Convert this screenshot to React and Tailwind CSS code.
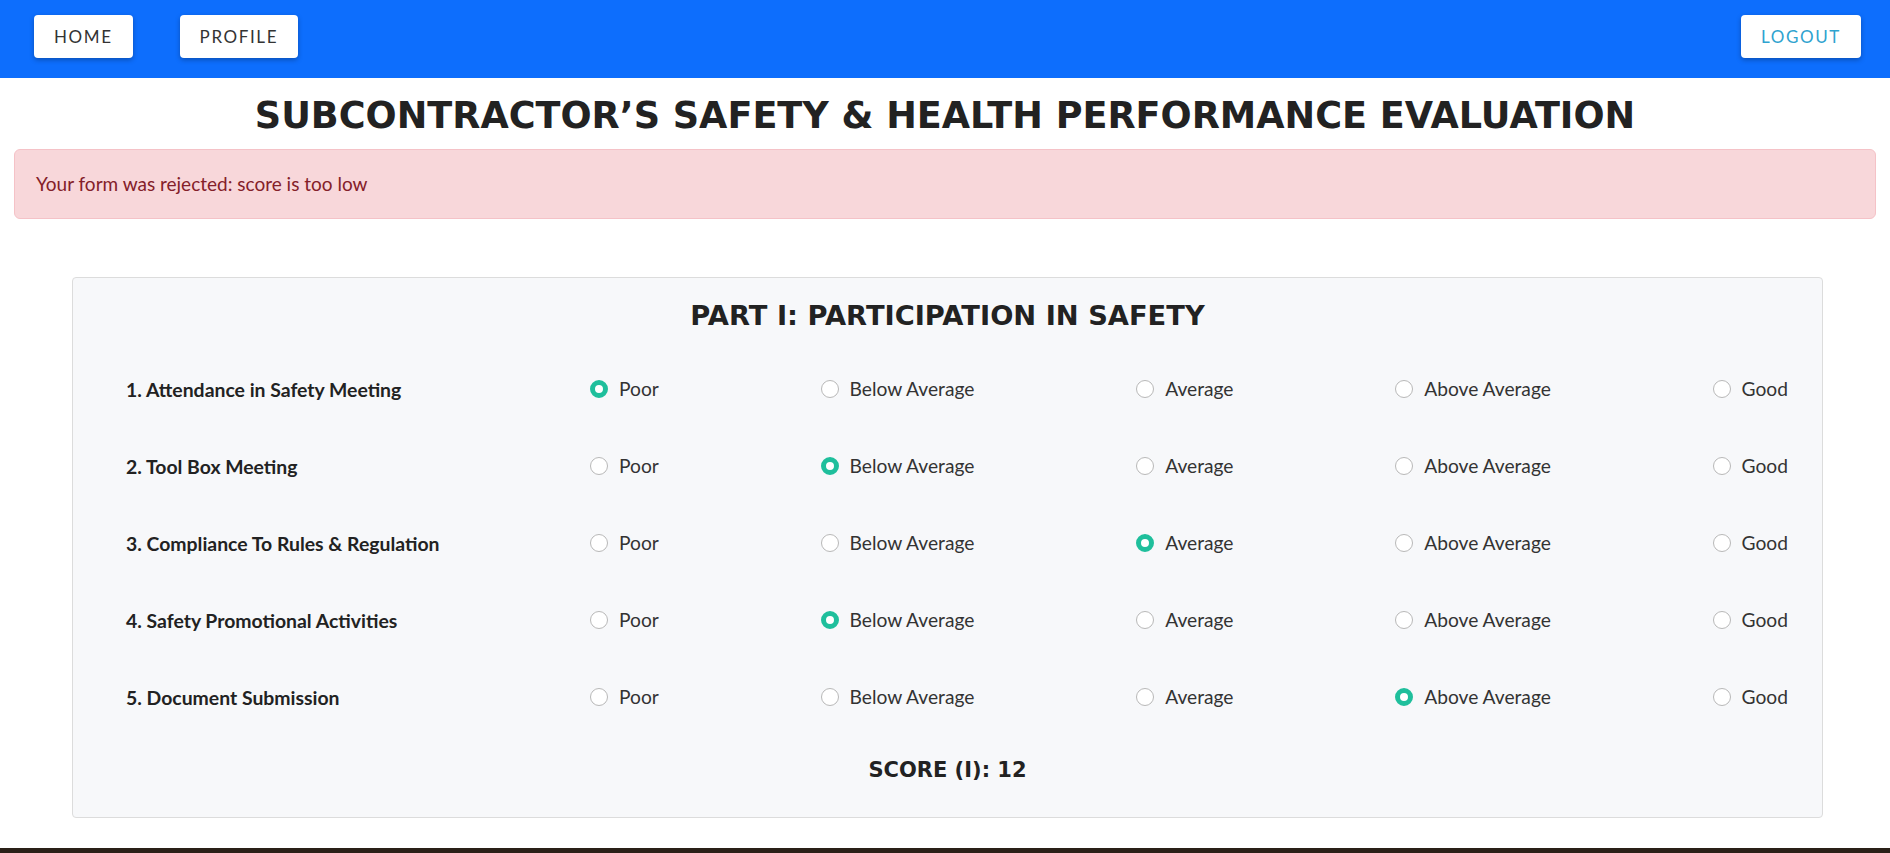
import { useState } from "react";

const OPTIONS = ["Poor", "Below Average", "Average", "Above Average", "Good"];

const QUESTIONS = [
  { label: "1. Attendance in Safety Meeting", pick: 0 },
  { label: "2. Tool Box Meeting", pick: 1 },
  { label: "3. Compliance To Rules & Regulation", pick: 2 },
  { label: "4. Safety Promotional Activities", pick: 1 },
  { label: "5. Document Submission", pick: 3 },
];

function NavButton({ children, className = "" }) {
  return (
    <button
      className={`h-[43px] px-[20px] bg-white rounded-[4px] shadow-[0_2px_5px_rgba(0,0,0,0.28)] uppercase text-[17px] tracking-[1.6px] ${className}`}
    >
      {children}
    </button>
  );
}

function Radio({ checked, onClick, label }) {
  return (
    <label onClick={onClick} className="flex items-center gap-[11px] cursor-pointer">
      {checked ? (
        <span className="w-[18px] h-[18px] rounded-full bg-white border-[5px] border-[#1fbf9c]" />
      ) : (
        <span className="w-[18px] h-[18px] rounded-full bg-white border border-[#b8b8b8]" />
      )}
      <span className="text-[#333] text-[19.2px]">{label}</span>
    </label>
  );
}

export default function App() {
  const [picks, setPicks] = useState(QUESTIONS.map((q) => q.pick));

  // score: Poor=1 .. Good=5
  const score = picks.reduce((sum, p) => sum + p + 1, 0);

  return (
    <div className="min-h-screen bg-white font-['Lato','Liberation_Sans',sans-serif] text-[#212529]">
      <nav className="h-[78px] bg-[#0d6efd] flex items-start justify-between pt-[15px] pl-[34px] pr-[29px]">
        <div className="flex items-center gap-[47px]">
          <NavButton className="text-[#333]">Home</NavButton>
          <NavButton className="text-[#333]">Profile</NavButton>
        </div>
        <NavButton className="text-[#2fa3cf]">Logout</NavButton>
      </nav>

      <h1 className="mt-[15px] text-center font-['DejaVu_Sans','Liberation_Sans',sans-serif] font-bold text-[36.6px] leading-[46px] text-[#222]">
        SUBCONTRACTOR’S SAFETY &amp; HEALTH PERFORMANCE EVALUATION
      </h1>

      <div className="mx-[14px] mt-[10px] px-[21px] py-[21px] bg-[#f8d7da] border border-[#f5c2c7] rounded-[6px] text-[#842029] text-[19px] leading-[26px]">
        Your form was rejected: score is too low
      </div>

      <div className="ml-[72px] mr-[67px] mt-[58px] bg-[#f7f8fa] border border-[#dcdcdc] rounded-[4px] pt-[21px] pb-[32px]">
        <h2 className="text-center font-['DejaVu_Sans','Liberation_Sans',sans-serif] font-bold text-[27.3px] leading-[34px] text-[#222]">
          PART I: PARTICIPATION IN SAFETY
        </h2>

        <div className="mt-[18px] flex flex-col">
          {QUESTIONS.map((q, qi) => (
            <div key={q.label} className="h-[77px] flex items-center pl-[53px] pr-[34px]">
              <div className="w-[464px] font-bold text-[19.4px] text-[#222]">{q.label}</div>
              <div className="flex-1 flex items-center justify-between">
                {OPTIONS.map((opt, oi) => (
                  <Radio
                    key={opt}
                    label={opt}
                    checked={picks[qi] === oi}
                    onClick={() =>
                      setPicks((prev) => prev.map((p, i) => (i === qi ? oi : p)))
                    }
                  />
                ))}
              </div>
            </div>
          ))}
        </div>

        <div className="mt-[20px] text-center font-['DejaVu_Sans','Liberation_Sans',sans-serif] font-bold text-[21px] leading-[29px] text-[#222]">
          SCORE (I): {score}
        </div>
      </div>

      <footer className="mt-[30px] h-[60px] bg-[#2a2018]" />
    </div>
  );
}
